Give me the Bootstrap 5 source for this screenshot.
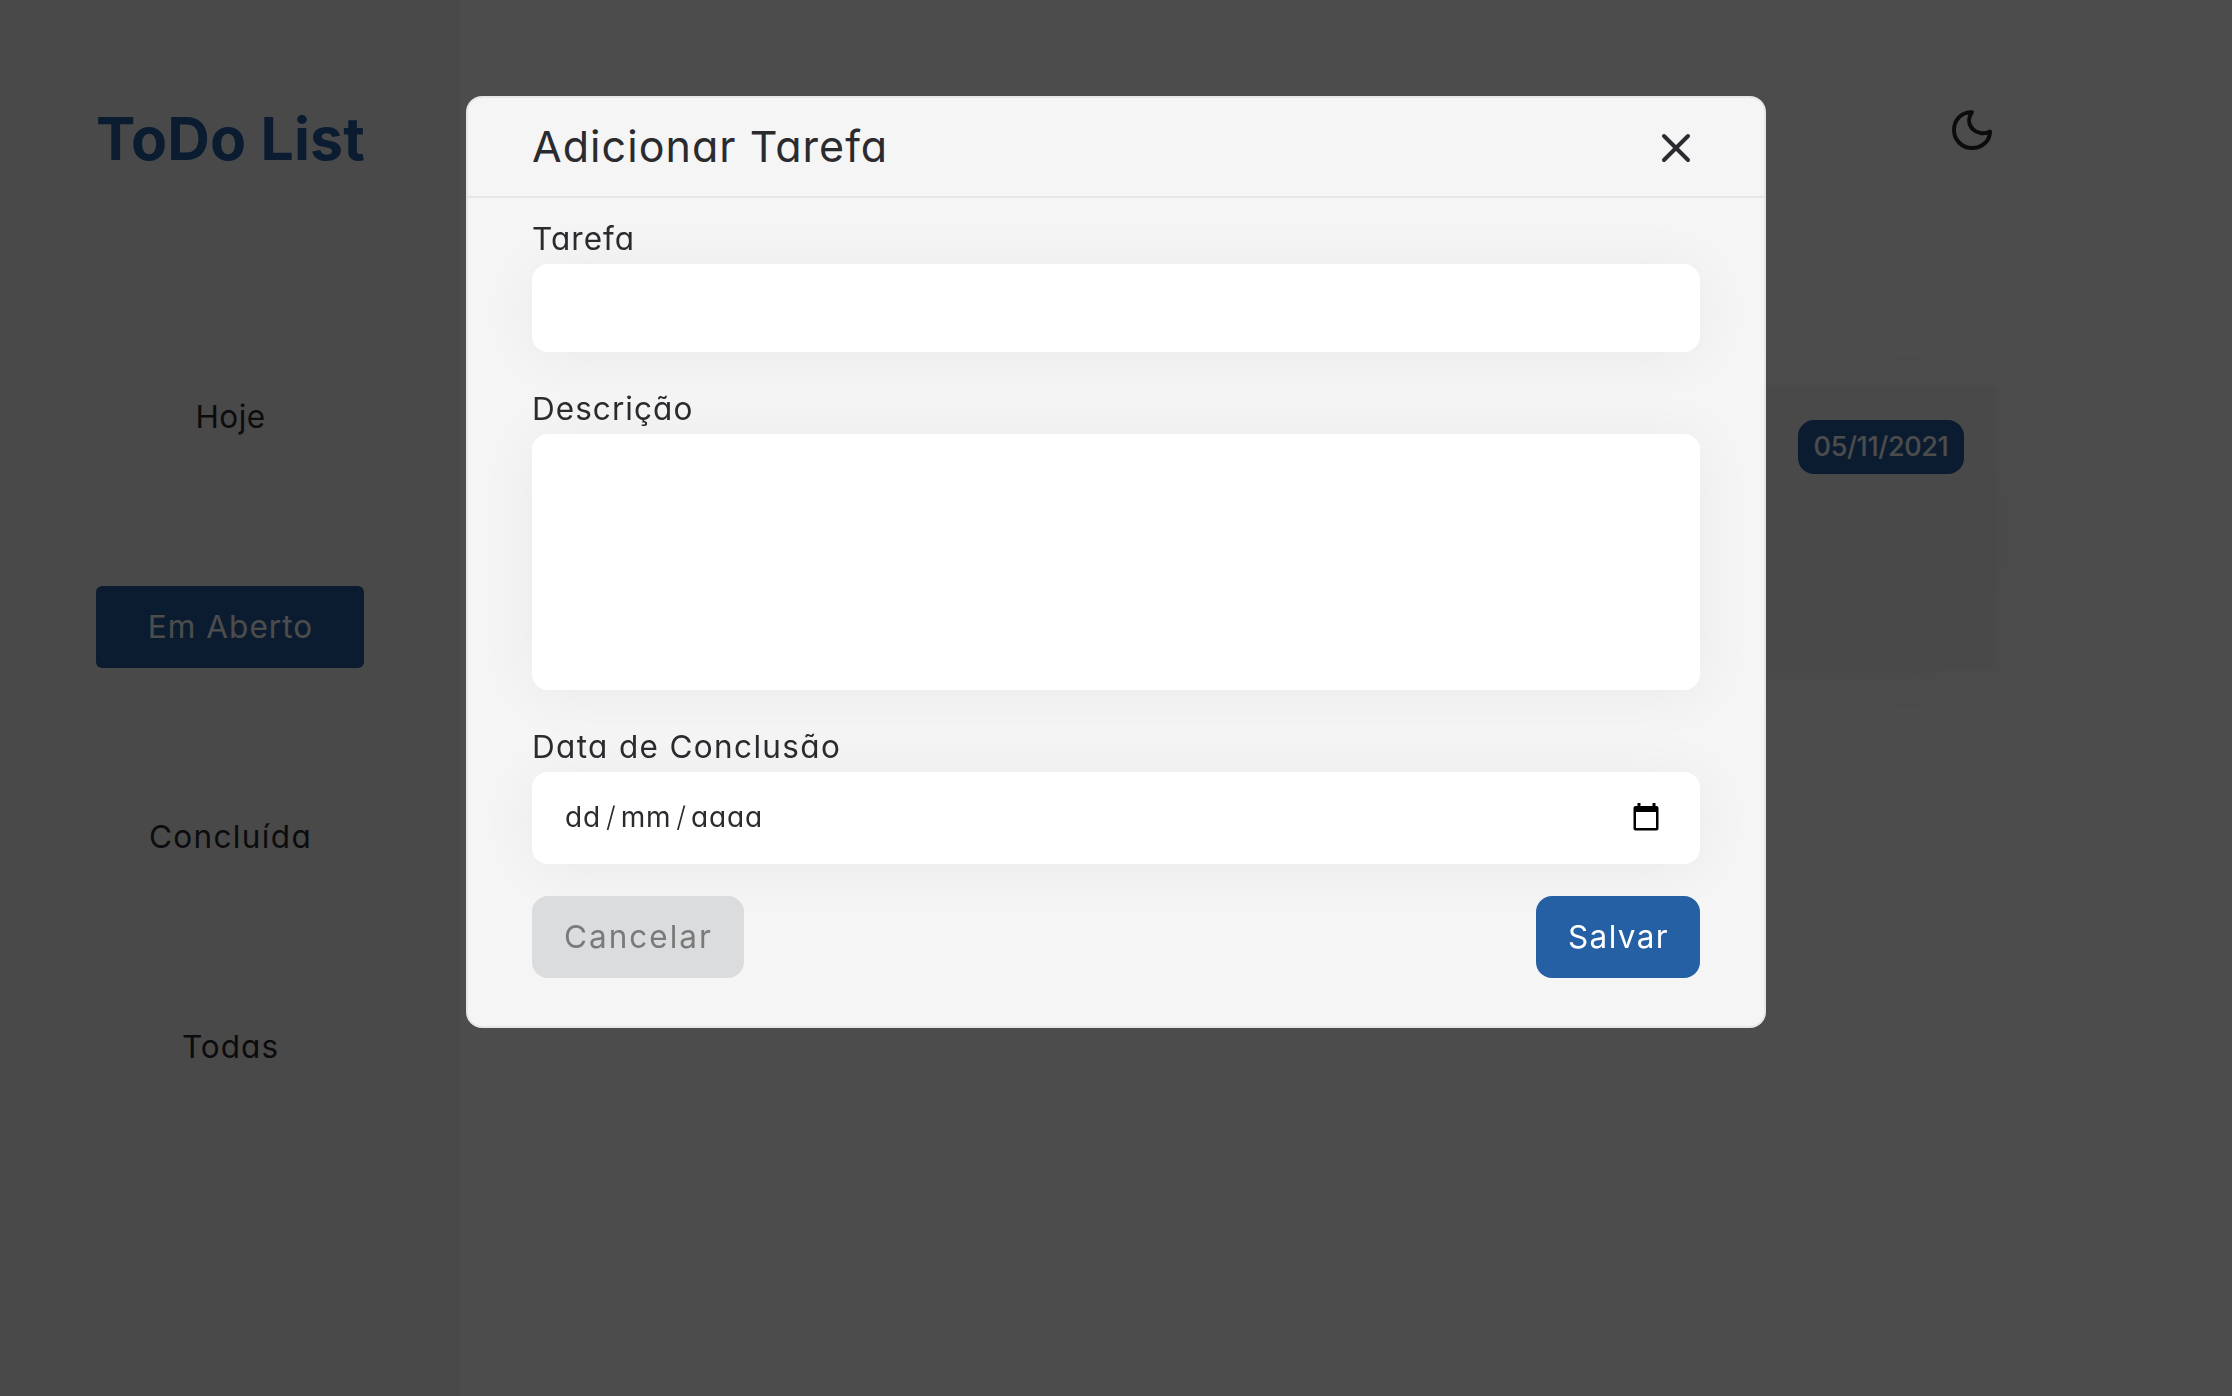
<!DOCTYPE html>
<html lang="pt-BR">
<head>
<meta charset="utf-8">
<meta name="viewport" content="width=device-width, initial-scale=1">
<title>ToDo List</title>
<link href="https://cdn.jsdelivr.net/npm/bootstrap@5.3.0/dist/css/bootstrap.min.css" rel="stylesheet">
<style>
  body { font-family: Inter, "Open Sans", sans-serif; font-size: 31.5px; line-height: 48px; color: #2b2b2f; background: #fff; font-feature-settings: "cv11"; height: 1396px; overflow: hidden; }
  .sidebar { width: 460px; background: #f5f5f5; padding: 97px 96px 96px; height: 1396px; }
  .brand { font-size: 59px; font-weight: 700; line-height: 84px; color: #2660a4; margin-bottom: 195px; white-space: nowrap; letter-spacing: .15px; }
  .side-link { height: 82px; line-height: 82px; border-radius: 8px; padding: 0 0 0 1px; text-align: center; color: #2b2b2f; white-space: nowrap; }
  .nav-pills .side-link.active { background: #2660a4; color: #fff; }
  .side-nav { gap: 128px; }
  .main-area { padding: 108px 236px 0 96px; }
  .moon { width: 48px; height: 48px; }
  .task-card { height: 284px; margin-top: 230px; border: 0; border-radius: 8px; background: #f5f5f5; box-shadow: 0 4px 96px rgba(0,0,0,.05); padding: 34px 32px; }
  .date-badge { width: 166px; height: 54px; line-height: 54px; border-radius: 16px; background: #2660a4; color: #fff; font-size: 27px; font-weight: 500; letter-spacing: -.35px; padding: 0; }
  .overlay { background: rgba(0,0,0,.7); }
  .modal-dialog.task-dialog { max-width: 1300px; margin: 96px auto; }
  .task-dialog .modal-content { border: 2px solid #e6e6e6; border-radius: 16px; background: #f5f5f5; color: #2b2b2f; height: 932px; }
  .task-dialog .modal-header { height: 100px; padding: 0 64px; border-bottom: 2px solid #e6e6e6; border-radius: 0; }
  .task-dialog .modal-title { font-size: 43px; font-weight: 400; line-height: 64px; padding-bottom: 2px; }
  .task-dialog .modal-body { padding: 18px 64px 48px; }
  .close-icon { margin-top: 2px; }
  .field-label { display: block; line-height: 46px; margin: 0 0 2px; }
  .field-box { display: flex; border: 0; border-radius: 16px; background: #fff; box-shadow: 0 4px 60px rgba(0,0,0,.05); padding: 0 32px; margin-bottom: 34px; font-size: 28px; color: #2b2b2f; resize: none; }
  .h-line { height: 88px; } .h-area { height: 256px; }
  .h-date { height: 92px; margin-bottom: 32px; padding: 0 40px 3px 33px; }
  .date-sep { margin: 0 5px; font-weight: 300; }
  .date-part { letter-spacing: .8px; }
  .action { height: 82px; line-height: 82px; padding: 0 0 0 1px; border: 0; border-radius: 16px; font-size: 31.5px; }
  .cancel { width: 212px; background: #dbdcde; color: #7a7a7a; }
  .save { width: 164px; background: #2660a4; color: #fff; }
  .track-s { letter-spacing: .4px; } .track-m { letter-spacing: 1.05px; } .track-l { letter-spacing: 1.35px; } .track-xl { letter-spacing: 2px; }
</style>
</head>
<body>
<div class="d-flex">
  <aside class="sidebar flex-shrink-0">
    <h1 class="brand">ToDo List</h1>
    <nav class="nav nav-pills flex-column side-nav">
      <a class="nav-link side-link track-s">Hoje</a>
      <a class="nav-link side-link active track-m">Em Aberto</a>
      <a class="nav-link side-link track-l">Concluída</a>
      <a class="nav-link side-link track-m">Todas</a>
    </nav>
  </aside>
  <main class="main-area flex-grow-1">
    <div class="d-flex justify-content-end">
      <svg class="moon" viewBox="0 0 48 48" fill="none" stroke="#2b2b2f" stroke-width="4" stroke-linejoin="round"><path d="M24 4.200C13 4 6 12 6 22C6 32 14 40 24 40C34 40 42 33 42 23.500C29 30 15 17 24 4.200Z"/></svg>
    </div>
    <div class="card task-card">
      <div class="d-flex justify-content-end"><span class="badge date-badge">05/11/2021</span></div>
    </div>
  </main>
</div>

<div class="modal d-block overlay" tabindex="-1">
  <div class="modal-dialog task-dialog">
    <div class="modal-content">
      <div class="modal-header d-flex justify-content-between align-items-center">
        <h2 class="modal-title track-m">Adicionar Tarefa</h2>
        <svg class="close-icon" width="48" height="48" viewBox="0 0 48 48" stroke="#2b2b2f" stroke-width="4" stroke-linecap="round"><path d="M12 12L36 36M36 12L12 36"/></svg>
      </div>
      <div class="modal-body">
        <label class="field-label track-m">Tarefa</label>
        <input class="form-control field-box h-line" type="text">
        <label class="field-label track-m">Descrição</label>
        <textarea class="form-control field-box h-area"></textarea>
        <label class="field-label track-l">Data de Conclusão</label>
        <div class="field-box h-date align-items-center justify-content-between">
          <div class="d-flex"><span class="date-part">dd</span><span class="date-sep">/</span><span class="date-part">mm</span><span class="date-sep">/</span><span class="date-part">aaaa</span></div>
          <svg width="28" height="28" viewBox="0 0 28 28"><path fill-rule="evenodd" d="M5.500 0h3v3h12v-3h3v3h1c1.100 0 2 .9 2 2v20.500c0 1.100-.9 2-2 2h-21c-1.100 0-2-.9-2-2v-20.500c0-1.100.9-2 2-2h2zM4 9v16h20v-16z"/></svg>
        </div>
        <div class="d-flex justify-content-between">
          <button class="btn action cancel track-xl">Cancelar</button>
          <button class="btn action save track-l">Salvar</button>
        </div>
      </div>
    </div>
  </div>
</div>
<script src="https://cdn.jsdelivr.net/npm/bootstrap@5.3.0/dist/js/bootstrap.bundle.min.js"></script>
</body>
</html>
